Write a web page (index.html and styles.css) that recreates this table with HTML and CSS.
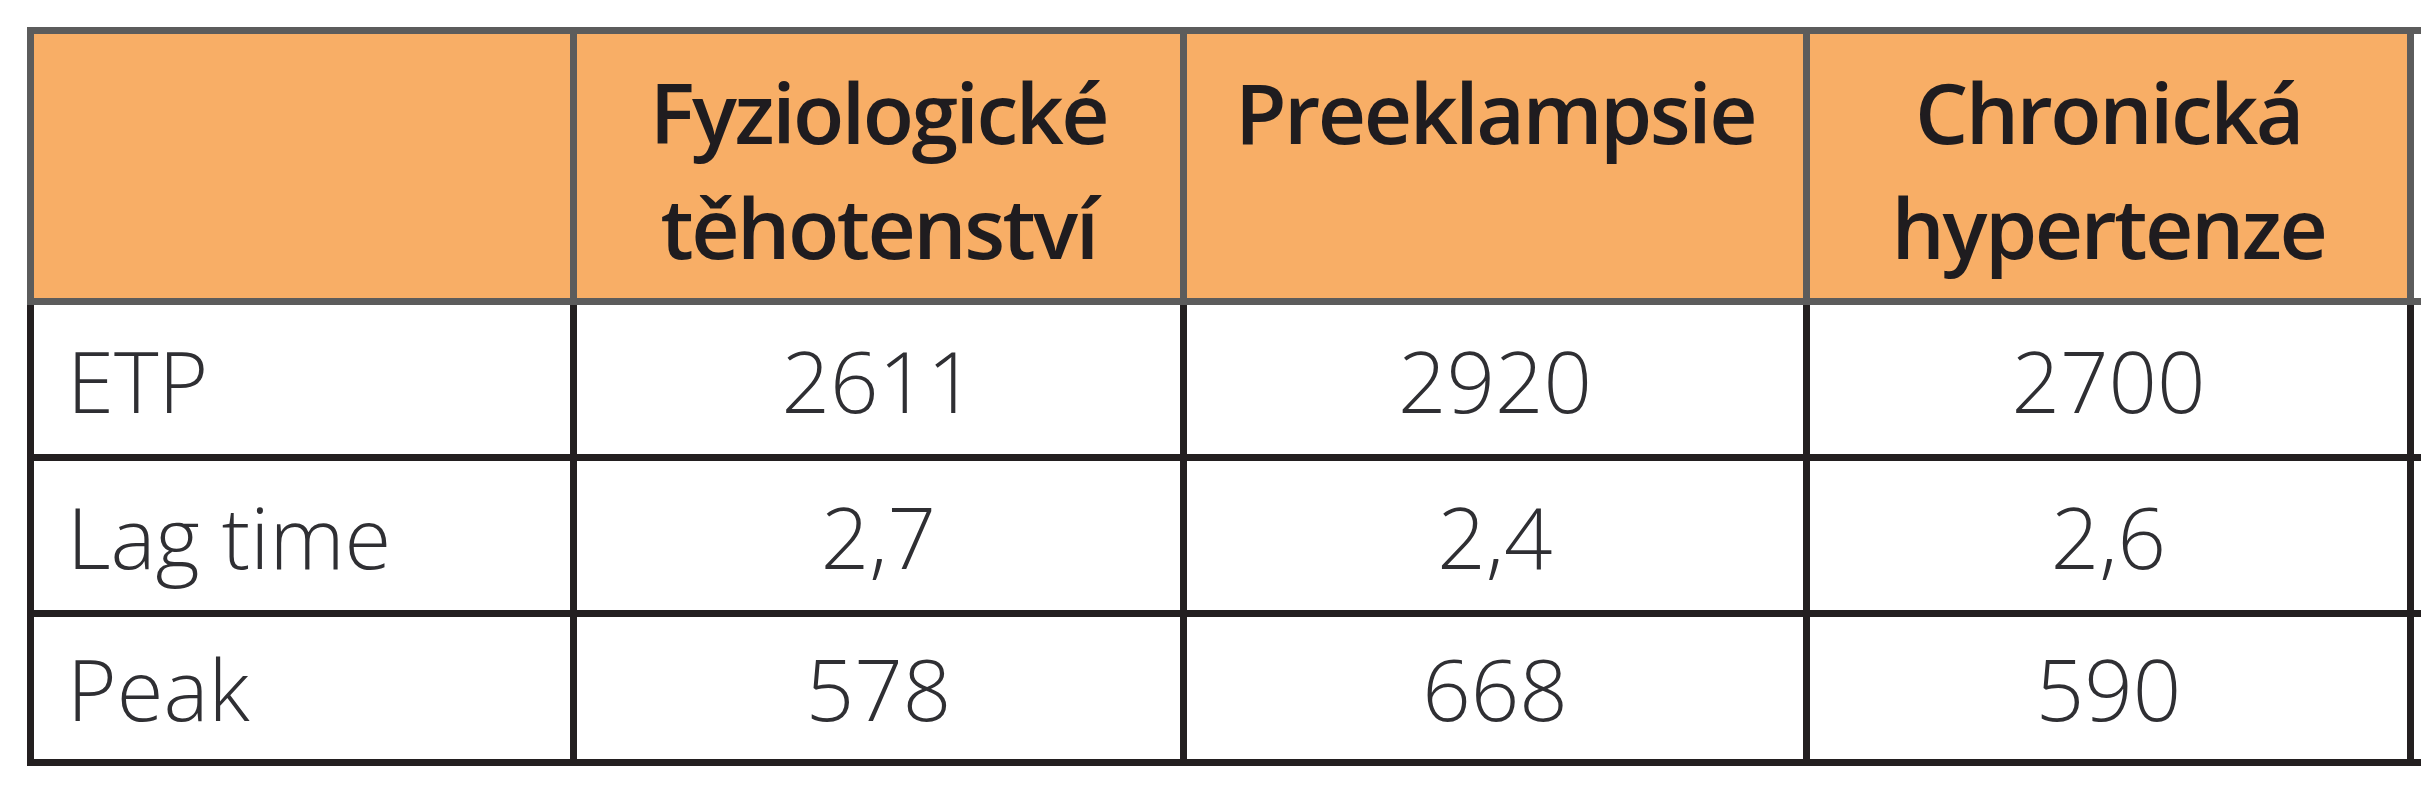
FILE: index.html
```html
<!DOCTYPE html>
<html lang="cs">
<head>
<meta charset="utf-8">
<title>Tabulka</title>
<link rel="stylesheet" href="styles.css">
</head>
<body>
<table class="data">
  <colgroup>
    <col class="c1"><col class="c2"><col class="c3"><col class="c4"><col class="c5">
  </colgroup>
  <thead>
    <tr class="head">
      <th class="first"></th>
      <th>Fyziologické<br>těhotenství</th>
      <th>Preeklampsie</th>
      <th>Chronická<br>hypertenze</th>
      <th class="stub"></th>
    </tr>
  </thead>
  <tbody>
    <tr class="r1">
      <td class="first label">ETP</td>
      <td>2611</td>
      <td>2920</td>
      <td>2700</td>
      <td class="stub"></td>
    </tr>
    <tr class="r2">
      <td class="first label">Lag time</td>
      <td>2,7</td>
      <td>2,4</td>
      <td>2,6</td>
      <td class="stub"></td>
    </tr>
    <tr class="r3">
      <td class="first label">Peak</td>
      <td>578</td>
      <td>668</td>
      <td>590</td>
      <td class="stub"></td>
    </tr>
  </tbody>
</table>
</body>
</html>
```
FILE: styles.css
```css
html, body {
  margin: 0;
  padding: 0;
  background: #ffffff;
}

body {
  padding: 27px 0 0 27px;
}

.data {
  border-collapse: separate;
  border-spacing: 0;
  table-layout: fixed;
  width: 2394px;
}

.c1 { width: 550px; }
.c2 { width: 610px; }
.c3 { width: 623px; }
.c4 { width: 604px; }
.c5 { width: 7px; }

.data th,
.data td {
  box-sizing: border-box;
  padding: 0;
  border-right: 7px solid #231f20;
  border-bottom: 7px solid #231f20;
}

.data .first {
  border-left: 7px solid #231f20;
}

.data .stub {
  border-right: 0;
  background: #ffffff;
}

/* header */
.head th {
  background: #f8ae66;
  border-top: 7px solid #5c5c5c;
  border-right-color: #5c5c5c;
  border-bottom-color: #5c5c5c;
  height: 278px;
  vertical-align: top;
  padding-top: 20px;
  font-family: "Open Sans", "Liberation Sans", sans-serif;
  font-weight: 600;
  font-size: 84px;
  letter-spacing: -2.5px;
  line-height: 115px;
  color: #1f1c1f;
  text-align: center;
}

.head th.first {
  border-left-color: #5c5c5c;
}

.head th.stub {
  background: #ffffff;
}

/* body */
.data td {
  font-family: "Open Sans", "Liberation Sans", sans-serif;
  font-weight: 300;
  font-size: 85px;
  line-height: 100px;
  color: #2f2f33;
  text-align: center;
  vertical-align: middle;
}

.data td.label {
  text-align: left;
  padding-left: 33px;
}

.r1 td, .r2 td { height: 156px; }
.r3 td { height: 149px; }
```
